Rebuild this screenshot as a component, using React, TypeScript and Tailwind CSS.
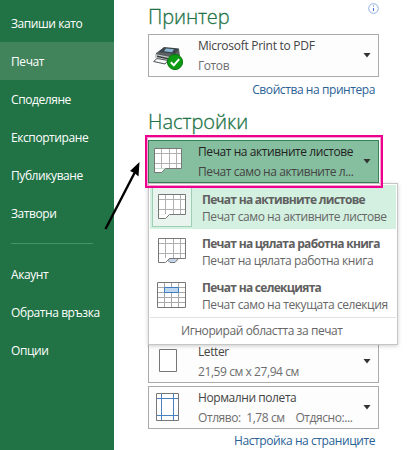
import clsx from "clsx";
import type { ReactNode } from "react";

const topLinks = [
  { label: "Запиши като" },
  { label: "Печат", active: true },
  { label: "Споделяне" },
  { label: "Експортиране" },
  { label: "Публикуване" },
  { label: "Затвори" },
];

const bottomLinks = [{ label: "Акаунт" }, { label: "Обратна връзка" }, { label: "Опции" }];

function NavItem({ label, active }: { label: string; active?: boolean }) {
  return (
    <a className={clsx("flex h-[38px] items-center pt-px pl-[11px] text-white", active && "bg-[#41835a]")}>
      {label}
    </a>
  );
}

function Caret() {
  return (
    <svg width="8" height="5" viewBox="0 0 8 5" className="mr-[7px] mb-px shrink-0">
      <path d="M0.5 0h7L4 4.5z" fill="#333" />
    </svg>
  );
}

function PrinterIcon() {
  return (
    <svg width="31" height="25" viewBox="0 0 31 25" className="-ml-px mt-[5px]">
      <path d="M3 7 11 2l15 1 1 7-9 5-15-4z" fill="#5b6164" />
      <path d="M5 6 11 1l15 1.5L22 8z" fill="#3d464b" />
      <path d="m13 2.500 8 .8-2 3-8-1z" fill="#8cb7d2" />
      <path d="M2 8 17 11v4L2 12z" fill="#c9cccc" />
      <path d="M4 9.500 15 12v1.500L4 11z" fill="#353a3d" />
      <path d="M4 12.500.6 15.500 12 18l3-3.500z" fill="#f7f7f7" stroke="#505558" />
      <circle cx="22" cy="16" r="7.6" fill="#0c9b12" stroke="#08780e" />
      <path d="m17.800 16.200 3 3 5.400-6" fill="none" stroke="#fff" strokeWidth="2" />
    </svg>
  );
}

function SheetsIcon({ book, className }: { book?: boolean; className?: string }) {
  return (
    <svg width="28" height="26" viewBox="0 0 28 26" fill="none" className={className}>
      <path d="M.5 .5h27v20H.5z" fill="#fff" />
      <path d="M7.500 1v19M15.500 1v19M22.500 1v19M1 5.500h26M1 15.500h26" stroke="#b0b0b0" />
      <path d="M1 21h9.500L8 24H1z" fill="#fff" />
      <path d="M.5 .5h27v20H11.500L7.500 24.500H.5z" stroke="#777" />
      {book && <path d="M11.500 20.500h9l-3.500 4h-5L10 22.500z" fill="#c5d3ea" stroke="#777" />}
    </svg>
  );
}

function SelectionIcon() {
  return (
    <svg width="30" height="26" viewBox="0 0 30 26" fill="none">
      <path d="M.5 .5h28v25H.5z" fill="#fff" />
      <path d="M7.500 1v24M14.500 1v24M21.500 1v24M1 5.500h27M1 10.500h27M1 15.500h27M1 20.500h27" stroke="#a8a8a8" />
      <path d="M.5 .5h28v25H.5z" stroke="#777" />
      <path d="M7.500 5.500h14v5h-14z" fill="#bdd7ee" stroke="#3f7fbf" />
    </svg>
  );
}

function PageIcon() {
  return (
    <svg width="18" height="23" viewBox="0 0 18 23" className="mb-[2px] ml-[5px]">
      <path d="M.5 .5h17v22H.5z" fill="#fff" stroke="#777" />
    </svg>
  );
}

function MarginsIcon() {
  return (
    <svg width="23" height="28" viewBox="0 0 23 28" className="mb-px ml-[2px]">
      <path d="M.5 .5h22v27H.5z" fill="#fff" />
      <path d="M5.500 1v26M17.500 1v26M1 5.500h21M1 22.500h21" stroke="#4a80bd" />
      <path d="M.5 .5h22v27H.5z" fill="none" stroke="#777" />
    </svg>
  );
}

type SelectProps = { icon: ReactNode; title: ReactNode; detail: string; active?: boolean };

function Select({ icon, title, detail, active }: SelectProps) {
  return (
    <div
      className={clsx(
        "flex h-[43px] w-[231px] shrink-0 items-center border",
        active ? "border-[#3b8259] bg-[#86bf9f]" : "border-[#ababab] bg-[#fdfdfd]"
      )}
    >
      <div className="flex w-[49px] shrink-0 pl-[5px]">{icon}</div>
      <div className="min-w-0 flex-1 whitespace-pre leading-5">
        <p className={active ? "text-[#222]" : "text-[#444]"}>{title}</p>
        <p className={active ? "text-[#444]" : "text-[#6d6d6d]"}>{detail}</p>
      </div>
      <Caret />
    </div>
  );
}

function MenuItem({ icon, title, detail, active }: SelectProps) {
  return (
    <div className={clsx("flex h-11 items-center pl-[2px]", active && "bg-[#d3f0e0]")}>
      <div
        className={clsx(
          "flex size-10 shrink-0 items-center justify-center border",
          active ? "border-[#9dcfb3] bg-[#e9f4ee]" : "border-transparent"
        )}
      >
        {icon}
      </div>
      <div className="whitespace-nowrap pt-px pl-[10px] leading-[17px] text-[#666]">
        <p className="font-bold tracking-[-0.71px] text-[#606060]">{title}</p>
        <p>{detail}</p>
      </div>
    </div>
  );
}

export default function App() {
  return (
    <div className="flex h-[450px] w-[408px] overflow-hidden bg-white font-['Open_Sans',sans-serif] text-[12px] tracking-[-0.42px]">
      <aside className="w-[114px] shrink-0 whitespace-nowrap bg-[#217346] pt-1">
        {topLinks.map((link) => (
          <NavItem key={link.label} {...link} />
        ))}
        <hr className="mt-[11px] mb-[11px] ml-[11px] w-[82px] border-[#439467]" />
        {bottomLinks.map((link) => (
          <NavItem key={link.label} {...link} />
        ))}
      </aside>

      <main className="relative flex flex-1 flex-col pl-[34px]">
        <div className="flex h-[34px] shrink-0 justify-between pr-[29px]">
          <h1 className="text-[20px] leading-[33px] font-light tracking-[-0.1px] text-[#217346] [-webkit-text-stroke:0.3px]">Принтер</h1>
          <svg width="11" height="11" viewBox="0 0 11 11" className="mt-[3px]" fill="none">
            <circle cx="5.5" cy="5.5" r="4.8" stroke="#8eb1e2" />
            <path d="M5.500 5v3M5.500 2.500v1" stroke="#4472c4" />
          </svg>
        </div>
        <Select
          icon={<PrinterIcon />}
          title={<span className="tracking-[-0.28px]">Microsoft Print to PDF</span>}
          detail="Готов"
        />
        <a className="mt-[3px] mr-[33px] self-end leading-[19px] text-[#2a6296]">Свойства на принтера</a>
        <h1 className="mt-[6px] h-[35px] shrink-0 text-[20px] leading-[33px] font-light tracking-normal text-[#217346] [-webkit-text-stroke:0.3px]">Настройки</h1>

        <Select
          active
          icon={<SheetsIcon className="mb-px" />}
          title="Печат на активните листове"
          detail="Печат само на активните л..."
        />
        <div className="mt-[157px] flex flex-col gap-[3px]">
          <Select icon={<PageIcon />} title="Letter" detail="21,59 см x 27,94 см" />
          <Select icon={<MarginsIcon />} title="Нормални полета" detail="Отляво:  1,78 см    Отдясно:..." />
        </div>
        <a className="mt-[2px] mr-[33px] self-end leading-[19px] text-[#2a6296]">Настройка на страниците</a>

        {/* Open dropdown */}
        <div className="absolute top-[183px] left-[34px] h-[162px] w-[250px] border border-[#c6c6c6] bg-white p-px shadow-[0_1px_4px_rgba(0,0,0,0.2)]">
          <MenuItem active icon={<SheetsIcon />} title="Печат на активните листове" detail="Печат само на активните листове" />
          <MenuItem icon={<SheetsIcon book />} title="Печат на цялата работна книга" detail="Печат на цялата работна книга" />
          <MenuItem icon={<SelectionIcon />} title="Печат на селекцията" detail="Печат само на текущата селекция" />
          <div className="border-t border-[#e1e1e1] pl-[31px] leading-[26px] text-[#666]">Игнорирай областта за печат</div>
        </div>

        {/* Callout frame and arrow */}
        <div className="absolute top-[135px] left-[31px] h-[53px] w-[238px] border-2 border-[#ec008c] outline-1 -outline-offset-3 outline-[#f7a1d2]" />
        <svg width="46" height="90" viewBox="0 0 46 90" className="absolute top-[145px] -left-[14px]">
          <path d="M5.500 84 35 27" stroke="#000" strokeWidth="2.4" />
          <path d="M39.500 17 38.500 31.500 34.500 28 30 26z" />
        </svg>
      </main>
    </div>
  );
}
